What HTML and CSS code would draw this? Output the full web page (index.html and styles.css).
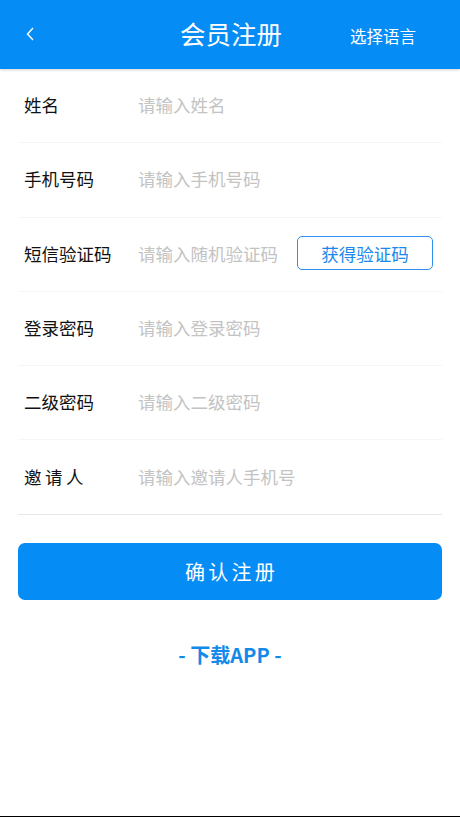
FILE: index.html
```html
<!DOCTYPE html>
<html lang="zh">
<head>
<meta charset="utf-8">
<title>会员注册</title>
<link rel="stylesheet" href="styles.css">
</head>
<body>
<div class="page">
  <header class="topbar">
    <div class="back">
      <svg width="8" height="14" viewBox="0 0 8 14"><path d="M7 1 L1.5 7 L7 13" fill="none" stroke="#fff" stroke-width="1.4"/></svg>
    </div>
    <h1 class="title">会员注册</h1>
    <div class="lang">选择语言</div>
  </header>
  <form class="form">
    <div class="row"><span class="label">姓名</span><span class="ph">请输入姓名</span></div>
    <div class="row"><span class="label">手机号码</span><span class="ph">请输入手机号码</span></div>
    <div class="row"><span class="label">短信验证码</span><span class="ph">请输入随机验证码</span><span class="code-btn">获得验证码</span></div>
    <div class="row"><span class="label">登录密码</span><span class="ph">请输入登录密码</span></div>
    <div class="row"><span class="label">二级密码</span><span class="ph">请输入二级密码</span></div>
    <div class="row last"><span class="label spaced">邀请人</span><span class="ph">请输入邀请人手机号</span></div>
  </form>
  <div class="submit">确认注册</div>
  <div class="download">- 下载APP -</div>
  <div class="spacer"></div>
  <div class="bottom-line"></div>
</div>
</body>
</html>
```
FILE: styles.css
```css
* { box-sizing: border-box; }
html, body { margin: 0; padding: 0; background: #fff; }
body { font-family: "Noto Sans CJK SC", "Noto Sans", sans-serif; }
.page { min-height: 817px; display: flex; flex-direction: column; }
.topbar {
  height: 69px;
  background: #068cf5;
  display: flex;
  align-items: center;
  padding: 0 0 4px 26px;
  box-shadow: 0 1px 3px rgba(0,0,0,0.18);
  color: #fff;
  position: relative;
  z-index: 1;
}
.back { width: 8px; height: 14px; display: flex; margin-top: 2px; }
.title { margin: 0 0 0 146px; font-size: 25.5px; font-weight: 400; line-height: 1; }
.lang { margin-left: 68px; font-size: 16.5px; line-height: 1; padding-top: 8px; }
.form { margin: 0 18px; display: flex; flex-direction: column; }
.row {
  height: 74.3px;
  display: flex;
  align-items: center;
  border-bottom: 1px solid #f6f6f6;
  padding-left: 6px;
  padding-bottom: 2px;
  font-size: 17.5px;
}
.row.last { border-bottom-color: #e6e6e6; }
.label { width: 114px; color: #111; }
.label.spaced { letter-spacing: 3.5px; }
.ph { color: #c3c3c3; flex: 1; }
.code-btn {
  width: 136px; height: 34px;
  border: 1px solid #2e90f0;
  border-radius: 5px;
  color: #1a88ee;
  display: flex; align-items: center; justify-content: center;
  margin-right: 9px;
  font-size: 17.5px;
}
.submit {
  margin: 28px 18px 0;
  height: 57px;
  background: #068cf5;
  border-radius: 7px;
  color: #fff;
  font-size: 20px;
  letter-spacing: 3.3px;
  display: flex; align-items: center; justify-content: center;
  padding-left: 3px;
}
.download {
  margin-top: 43px;
  text-align: center;
  color: #138ae9;
  font-size: 20px;
  font-weight: 700;
  line-height: 24px;
}
.spacer { flex: 1; }
.bottom-line { height: 1px; background: #000; }
```
